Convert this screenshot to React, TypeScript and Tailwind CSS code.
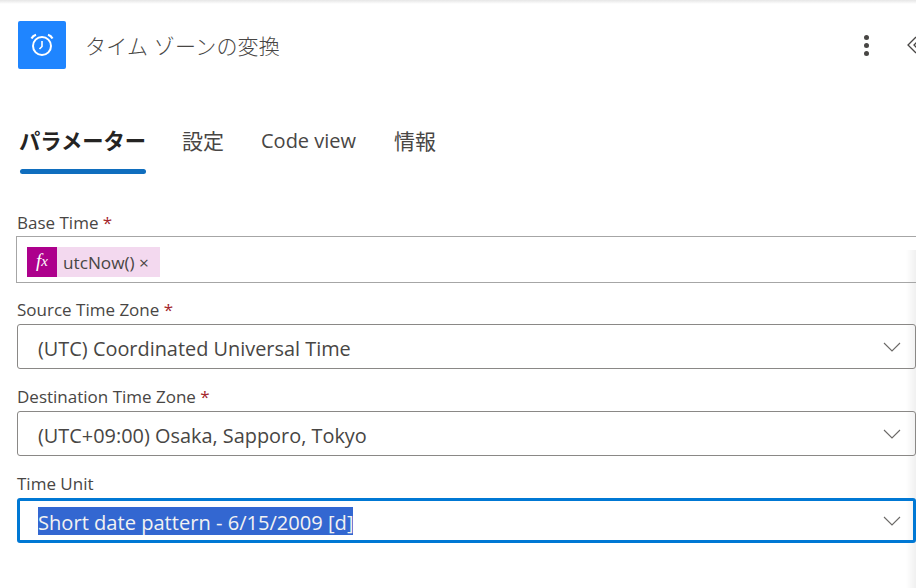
import React from 'react';

const latin = "font-['Open_Sans','Noto_Sans_CJK_JP',sans-serif]";

const Chevron = () => (
  <svg width="18" height="10" viewBox="0 0 18 10" fill="none" className="shrink-0">
    <path d="M1 1l8 8 8-8" stroke="#6b6967" strokeWidth="1.1" />
  </svg>
);

const Label = ({ text, required }: { text: string; required?: boolean }) => (
  <div className="h-[27px] pl-[17px] text-[17px] leading-[25px] text-[#484644]">
    {text}
    {required && <span className="text-[#a4262c]"> *</span>}
  </div>
);

const Select = ({ value }: { value: string }) => (
  <div className="ml-[17px] flex h-[45px] items-center justify-between rounded-[3px] border border-[#8a8886] pl-5 pr-[14px] text-[19.9px] text-[#484644]">
    <span className="block pt-1">{value}</span>
    <Chevron />
  </div>
);

export default function App() {
  return (
    <div className={`relative h-[588px] w-[916px] overflow-hidden bg-white ${latin}`}>
      <div className="h-[4px] bg-gradient-to-b from-[#e6e6e6] to-white" />

      {/* panel edge shadow */}
      <div className="absolute bottom-0 right-0 top-[250px] w-[10px] bg-gradient-to-r from-transparent to-[#f0f0f0]" />

      <header className="mt-[17px] flex h-[48px] items-center pl-[18px]">
        <div className="flex h-12 w-12 items-center justify-center rounded-[2px] bg-[#1f85ff]">
          <svg width="26" height="26" viewBox="0 0 26 26" fill="none" stroke="white">
            <circle cx="13" cy="14" r="9" strokeWidth="2" />
            <path d="M13 9v5.500l-2.500 2.500" strokeWidth="1.6" />
            <path d="M2.500 6.500C3.500 4.500 5 3.300 7 2.700M23.500 6.500C22.500 4.500 21 3.300 19 2.700" strokeWidth="2.200" />
          </svg>
        </div>
        <h1 className="ml-[19px] pt-[3px] text-[21px] font-light tracking-[0.2px] text-[#484644]">タイム ゾーンの変換</h1>
        <div className="-mr-[5px] ml-auto flex items-center">
          <div className="flex flex-col gap-[3px]">
            <span className="h-[5px] w-[5px] rounded-full bg-[#484644]" />
            <span className="h-[5px] w-[5px] rounded-full bg-[#484644]" />
            <span className="h-[5px] w-[5px] rounded-full bg-[#484644]" />
          </div>
          <svg width="14" height="18" viewBox="0 0 14 18" fill="none" stroke="#484644" strokeWidth="1.300" className="ml-[38px]">
            <path d="M9 1L1 9l8 8" />
            <path d="M12 4L7 9l5 5" />
          </svg>
        </div>
      </header>

      <nav className="mt-[50px] flex h-[55px] items-start pl-5 text-[20px] text-[#484644]">
        <div className="flex w-[126px] flex-col">
          <span className="-ml-px h-[44px] text-[21.3px] leading-[44px] font-bold whitespace-nowrap text-[#252423]">パラメーター</span>
          <span className="mt-[6px] h-[5px] rounded-[3px] bg-[#106ebe]" />
        </div>
        <span className="ml-[36px] text-[21px] leading-[44px]">設定</span>
        <span className="ml-[37px] leading-[44px]">Code view</span>
        <span className="ml-[38px] text-[21px] leading-[44px]">情報</span>
      </nav>

      <form className="relative mt-[36px]">
        <Label text="Base Time" required />
        <div className="-mt-px ml-4 flex h-[47px] w-[920px] items-center border border-[#a6a6a6] pl-[10px] pt-1">
          <span className="flex h-[30px] items-center bg-[#f3d9ef] pr-[11px] text-[17.2px] text-[#484644]">
            <span className="mr-[6px] flex h-[30px] w-[30px] items-center justify-center bg-[#ad008c] font-['Liberation_Serif',serif] italic text-white">
              <span className="text-[19px]">f</span>
              <span className="text-[15px]">x</span>
            </span>
            <span className="block pt-[2px]">utcNow() ×</span>
          </span>
        </div>

        <div className="mt-[14px]">
          <Label text="Source Time Zone" required />
          <Select value="(UTC) Coordinated Universal Time" />
        </div>

        <div className="mt-[15px]">
          <Label text="Destination Time Zone" required />
          <Select value="(UTC+09:00) Osaka, Sapporo, Tokyo" />
        </div>

        <div className="mt-[15px]">
          <Label text="Time Unit" />
          <div className="ml-[17px] flex h-[45px] items-center justify-between rounded-[3px] border-[3px] border-[#0078d4] pl-[18px] pr-[12px] text-[20.1px]">
            <span className="block h-[28px] bg-[#3367d1] leading-[31px] text-[#f2f2f2]">Short date pattern - 6/15/2009 [d]</span>
            <Chevron />
          </div>
        </div>
      </form>
    </div>
  );
}
